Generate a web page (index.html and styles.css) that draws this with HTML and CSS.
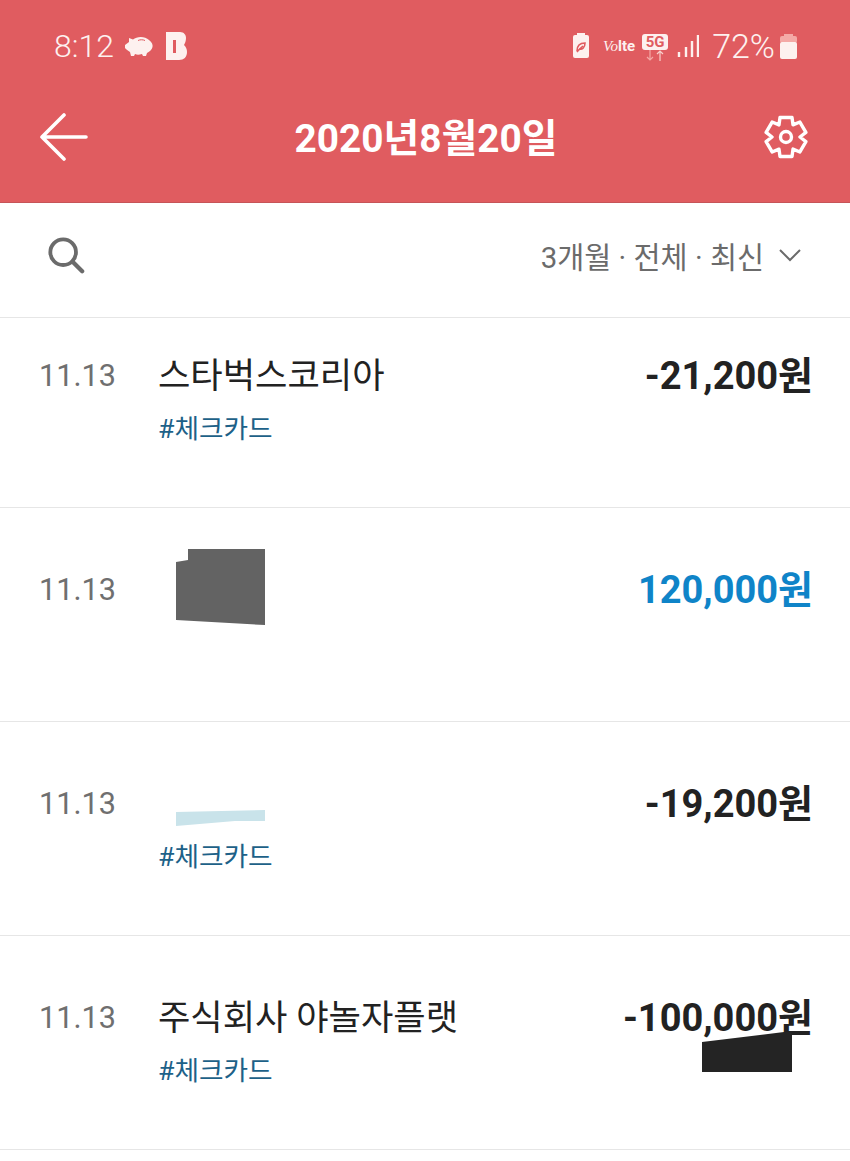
FILE: index.html
```html
<!DOCTYPE html>
<html lang="ko">
<head>
  <meta charset="UTF-8" />
  <meta name="viewport" content="width=device-width, initial-scale=1" />
  <title>거래내역</title>
  <link rel="stylesheet" href="styles.css">
</head>
<body>

  <header class="top">
    <div class="status">
      <div class="status-left">
        <span class="clock">8:12</span>
        <svg class="pig" width="30" height="24" viewBox="0 0 30 24"><path d="M1 11 L5 8 L5 4 L9 5.500 C13 2 21 2 25 6 C28 8 29 11 28.500 13 C28 16 25 18 23 19 L22 22 L19 22 L18 20 C15 21 13 21 11 20 L10 22 L7 22 L6 18 C4 17 2 15 1 14 Z" fill="#fdf1ef"/><path d="M14 6.500 C16 5.500 19 5.500 21 6.500" stroke="#e05c60" stroke-width="1" fill="none"/></svg>
        <svg class="blogo" width="24" height="30" viewBox="0 0 24 30"><path d="M2 1 H16 C20 1 22 4 22 7 C22 10 21 12 20 14 C22 16 23 18 23 21 C23 26 20 29 15 29 H2 Z" fill="#fdf1ef"/><rect x="9" y="9" width="3" height="13" fill="#e05c60"/></svg>
      </div>
      <div class="status-right">
        <svg class="leaf" width="18" height="26" viewBox="0 0 18 26"><rect x="5" y="0" width="8" height="3" fill="#fdf1ef"/><rect x="1" y="2" width="16" height="23" rx="2" fill="#fdf1ef"/><path d="M5 18 C5 12 9 10 13 10 C13 15 10 17 7 16 M5 19 C7 16 9 15 11 13" stroke="#e05c60" stroke-width="1.600" fill="none"/></svg>
        <span class="volte"><i>Vo</i>lte</span>
        <div class="net">
          <span class="five-g">5G</span>
          <svg width="24" height="11" viewBox="0 0 24 11"><path d="M7 0 V10 M4 7 L7 10 L10 7" stroke="#f4a9a6" stroke-width="1.200" fill="none"/><path d="M17 11 V1 M14 4 L17 1 L20 4" stroke="#f8cfcb" stroke-width="1.200" fill="none"/></svg>
        </div>
        <svg class="signal" width="22" height="24" viewBox="0 0 22 24"><path d="M2 18 V23 M9 13 V23 M15 7 V23 M21 1 V23" stroke="#fdf1ef" stroke-width="2.400" fill="none"/></svg>
        <span class="battery-text">72%</span>
        <svg width="17" height="25" viewBox="0 0 17 25"><rect x="4" y="0" width="9" height="3" fill="#f4a9a6"/><rect x="0" y="2" width="17" height="7" rx="2" fill="#f4a9a6"/><rect x="0" y="8" width="17" height="17" rx="2" fill="#fdf1ef"/></svg>
      </div>
    </div>
    <div class="bar">
      <svg class="bar-icon" width="48" height="48" viewBox="0 0 48 48"><path d="M46 24 H2 M24 2 L2 24 L24 46" stroke="#fff" stroke-width="3.600" stroke-linecap="round" stroke-linejoin="round" fill="none"/></svg>
      <h1>2020년8월20일</h1>
      <svg class="bar-icon" width="44" height="44" viewBox="0 0 44 44"><path d="M16 2.500 H28 L29 9.880 L35.890 7.050 L41.890 17.450 L36 22 L41.890 26.550 L35.890 36.950 L29 34.120 L28 41.500 H16 L15 34.120 L8.110 36.950 L2.110 26.550 L8 22 L2.110 17.450 L8.110 7.050 L15 9.880 Z" stroke="#fff" stroke-width="3.400" stroke-linejoin="round" fill="none"/><circle cx="22" cy="22" r="5.500" stroke="#fff" stroke-width="3.400" fill="none"/></svg>
    </div>
  </header>

  <div class="tools">
    <svg width="38" height="38" viewBox="0 0 40 40"><circle cx="17" cy="17" r="13.500" stroke="#6b6b6b" stroke-width="4" fill="none"/><path d="M27 27 L37 37" stroke="#6b6b6b" stroke-width="4.500" stroke-linecap="round"/></svg>
    <div class="filter">
      <span>3개월 · 전체 · 최신</span>
      <svg width="24" height="14" viewBox="0 0 24 14"><path d="M2 2 L12 12 L22 2" stroke="#6b6b6b" stroke-width="2" fill="none"/></svg>
    </div>
  </div>

  <ul class="list">
    <li class="row first">
      <span class="date">11.13</span>
      <div class="info">
        <div class="name">스타벅스코리아</div>
        <div class="tag">#체크카드</div>
      </div>
      <span class="amount">-21,200원</span>
    </li>
    <li class="row">
      <span class="date">11.13</span>
      <div class="info">
        <svg class="mask mask-dark" width="92" height="78" viewBox="0 0 92 78"><path d="M13 1 H90 V77 L1 72 V14 L13 12 Z" fill="#636363"/></svg>
      </div>
      <span class="amount plus">120,000원</span>
    </li>
    <li class="row">
      <span class="date">11.13</span>
      <div class="info">
        <svg class="mask mask-light" width="92" height="18" viewBox="0 0 92 18"><path d="M1 3 L90 1 V12 L60 12 L1 17 Z" fill="#c9e3ea"/></svg>
        <div class="tag">#체크카드</div>
      </div>
      <span class="amount">-19,200원</span>
    </li>
    <li class="row">
      <span class="date">11.13</span>
      <div class="info">
        <div class="name">주식회사 야놀자플랫</div>
        <div class="tag">#체크카드</div>
      </div>
      <span class="amount">-100,000원</span>
      <svg class="mask mask-amount" width="92" height="44" viewBox="0 0 92 44"><path d="M1 12 L91 1 V42 H1 Z" fill="#242424"/></svg>
    </li>
  </ul>

</body>
</html>
```

FILE: styles.css
```css
* {
  box-sizing: border-box;
}

body {
  margin: 0;
  background: #ffffff;
  color: #222;
  font-family: Roboto, "Noto Sans CJK KR", sans-serif;
}

.top {
  height: 203px;
  background-color: #e05c60;
  border-bottom: 1px solid #c65458;
  color: #fff;
}

.status {
  height: 94px;
  padding: 28px 53px 0 54px;
  display: flex;
  justify-content: space-between;
  align-items: flex-start;
  color: #fdf1ef;
}

.status-left,
.status-right {
  display: flex;
  align-items: center;
  height: 36px;
}

.clock {
  font-size: 32px;
  font-weight: 300;
  margin-right: 10px;
}

.blogo {
  margin-left: 10px;
}

.volte {
  font-size: 15px;
  font-weight: 700;
  margin: 0 7px 0 13px;
  white-space: nowrap;
}

.volte i {
  font-family: "Liberation Serif", serif;
  font-weight: 400;
}

.net {
  width: 26px;
  display: flex;
  flex-direction: column;
  align-items: center;
  margin-top: 2px;
}

.five-g {
  width: 26px;
  height: 16px;
  line-height: 16px;
  background: #fdf1ef;
  color: #e05c60;
  border-radius: 3px;
  font-size: 15px;
  font-weight: 700;
  text-align: center;
}

.signal {
  margin-left: 9px;
}

.battery-text {
  font-size: 34px;
  font-weight: 300;
  margin: 0 5px 0 13px;
}

.bar {
  height: 108px;
  padding: 0 42px 22px 40px;
  display: flex;
  justify-content: space-between;
  align-items: center;
}

h1 {
  margin: 0 0 4px;
  font-size: 38.800px;
  font-weight: 700;
}

.tools {
  height: 115px;
  padding: 0 48px 11px 47px;
  display: flex;
  justify-content: space-between;
  align-items: center;
  border-bottom: 1px solid #e6e6e6;
}

.filter {
  display: flex;
  align-items: center;
  gap: 14px;
  font-size: 29.400px;
  color: #6b6b6b;
}

.list {
  list-style: none;
  margin: 0;
  padding: 0;
}

.row {
  position: relative;
  height: 214px;
  padding: 62px 37px 0 39px;
  display: flex;
  align-items: flex-start;
  border-bottom: 1px solid #e6e6e6;
}

.row.first {
  height: 190px;
  padding-top: 38px;
}

.date {
  width: 119px;
  font-size: 30.600px;
  line-height: 40px;
  color: #6f6f6f;
}

.info {
  flex: 1;
}

.name {
  font-size: 35.200px;
  line-height: 40px;
  color: #222;
}

.tag {
  margin-top: 13px;
  font-size: 26.700px;
  line-height: 40px;
  color: #1d6188;
}

.amount {
  font-size: 38px;
  line-height: 40px;
  font-weight: 700;
  color: #222;
}

.amount.plus {
  color: #0f84c8;
}

.mask {
  position: absolute;
  display: block;
}

.mask-dark {
  left: 175px;
  top: 40px;
}

.mask-light {
  left: 175px;
  top: 87px;
}

.mask-amount {
  left: 701px;
  top: 94px;
}

.mask-light + .tag {
  margin-top: 53px;
}
```
